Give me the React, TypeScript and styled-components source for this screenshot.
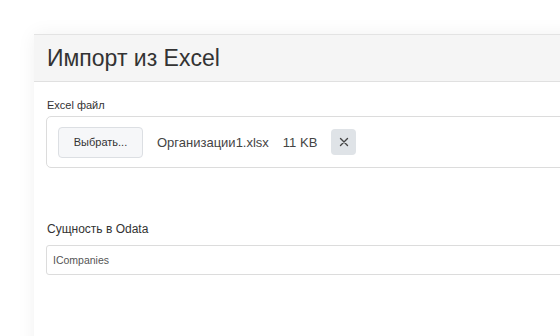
import React from "react";
import styled, { createGlobalStyle } from "styled-components";

const Global = createGlobalStyle`
  html, body { margin: 0; padding: 0; background: #ffffff; overflow: hidden; }
  body { font-family: "Liberation Sans", Arial, sans-serif; color: #333; }
`;

const Page = styled.div`
  width: 560px;
  height: 336px;
  overflow: hidden;
  padding: 34px 0 0 34px;
  box-sizing: border-box;
`;

const Panel = styled.div`
  width: 620px;
  height: 400px;
  background: #fff;
  box-shadow: 0 0 18px rgba(0, 0, 0, 0.06);
  display: flex;
  flex-direction: column;
`;

const Header = styled.div`
  height: 46px;
  box-sizing: content-box;
  background: #f5f5f5;
  border-top: 1px solid #e3e3e3;
  border-bottom: 1px solid #e0e0e0;
  display: flex;
  align-items: center;
  padding-left: 13px;
`;

const Title = styled.h1`
  margin: 0;
  font-size: 23px;
  font-weight: 400;
  color: #333;
  line-height: 1;
  padding-top: 1px;
`;

const Body = styled.div`
  padding: 0 12px;
  display: flex;
  flex-direction: column;
`;

const Label = styled.label<{ $size: number; $top: number }>`
  display: block;
  font-size: ${(p) => p.$size}px;
  line-height: 14px;
  color: #333;
  margin-top: ${(p) => p.$top}px;
  margin-bottom: ${(p) => (p.$size > 11 ? 9 : 4)}px;
  padding-left: 1px;
`;

const FileBox = styled.div`
  height: 52px;
  box-sizing: border-box;
  border: 1px solid #dcdcdc;
  border-radius: 5px;
  display: flex;
  align-items: center;
  padding-left: 11px;
  gap: 14px;
`;

const ChooseButton = styled.button`
  width: 85px;
  height: 31px;
  border: 1px solid #dcdfe3;
  border-radius: 4px;
  background: #f6f7f9;
  font-family: "Liberation Sans", Arial, sans-serif;
  font-size: 11px;
  color: #333;
  padding: 0;
  cursor: pointer;
`;

const FileText = styled.span`
  font-size: 13px;
  color: #444;
`;

const RemoveButton = styled.button`
  width: 25px;
  height: 26px;
  border: none;
  border-radius: 4px;
  background: #dfe3e7;
  display: flex;
  align-items: center;
  justify-content: center;
  padding: 0;
`;

const Input = styled.input`
  height: 30px;
  box-sizing: border-box;
  border: 1px solid #dcdcdc;
  border-radius: 3px;
  padding: 0 6px;
  font-family: "Liberation Sans", Arial, sans-serif;
  font-size: 10.5px;
  color: #555;
  outline: none;
`;

export default function App() {
  return (
    <>
      <Global />
      <Page>
        <Panel>
          <Header>
            <Title>Импорт из Excel</Title>
          </Header>
          <Body>
            <Label $size={11} $top={16}>Excel файл</Label>
            <FileBox>
              <ChooseButton>Выбрать...</ChooseButton>
              <FileText>Организации1.xlsx</FileText>
              <FileText>11 KB</FileText>
              <RemoveButton aria-label="remove">
                <svg width="10" height="10" viewBox="0 0 10 10">
                  <path d="M1.5 1.5 L8.5 8.5 M8.5 1.5 L1.5 8.5" stroke="#444" strokeWidth="1.4" strokeLinecap="round" />
                </svg>
              </RemoveButton>
            </FileBox>
            <Label $size={12} $top={54}>Сущность в Odata</Label>
            <Input defaultValue="ICompanies" />
          </Body>
        </Panel>
      </Page>
    </>
  );
}
